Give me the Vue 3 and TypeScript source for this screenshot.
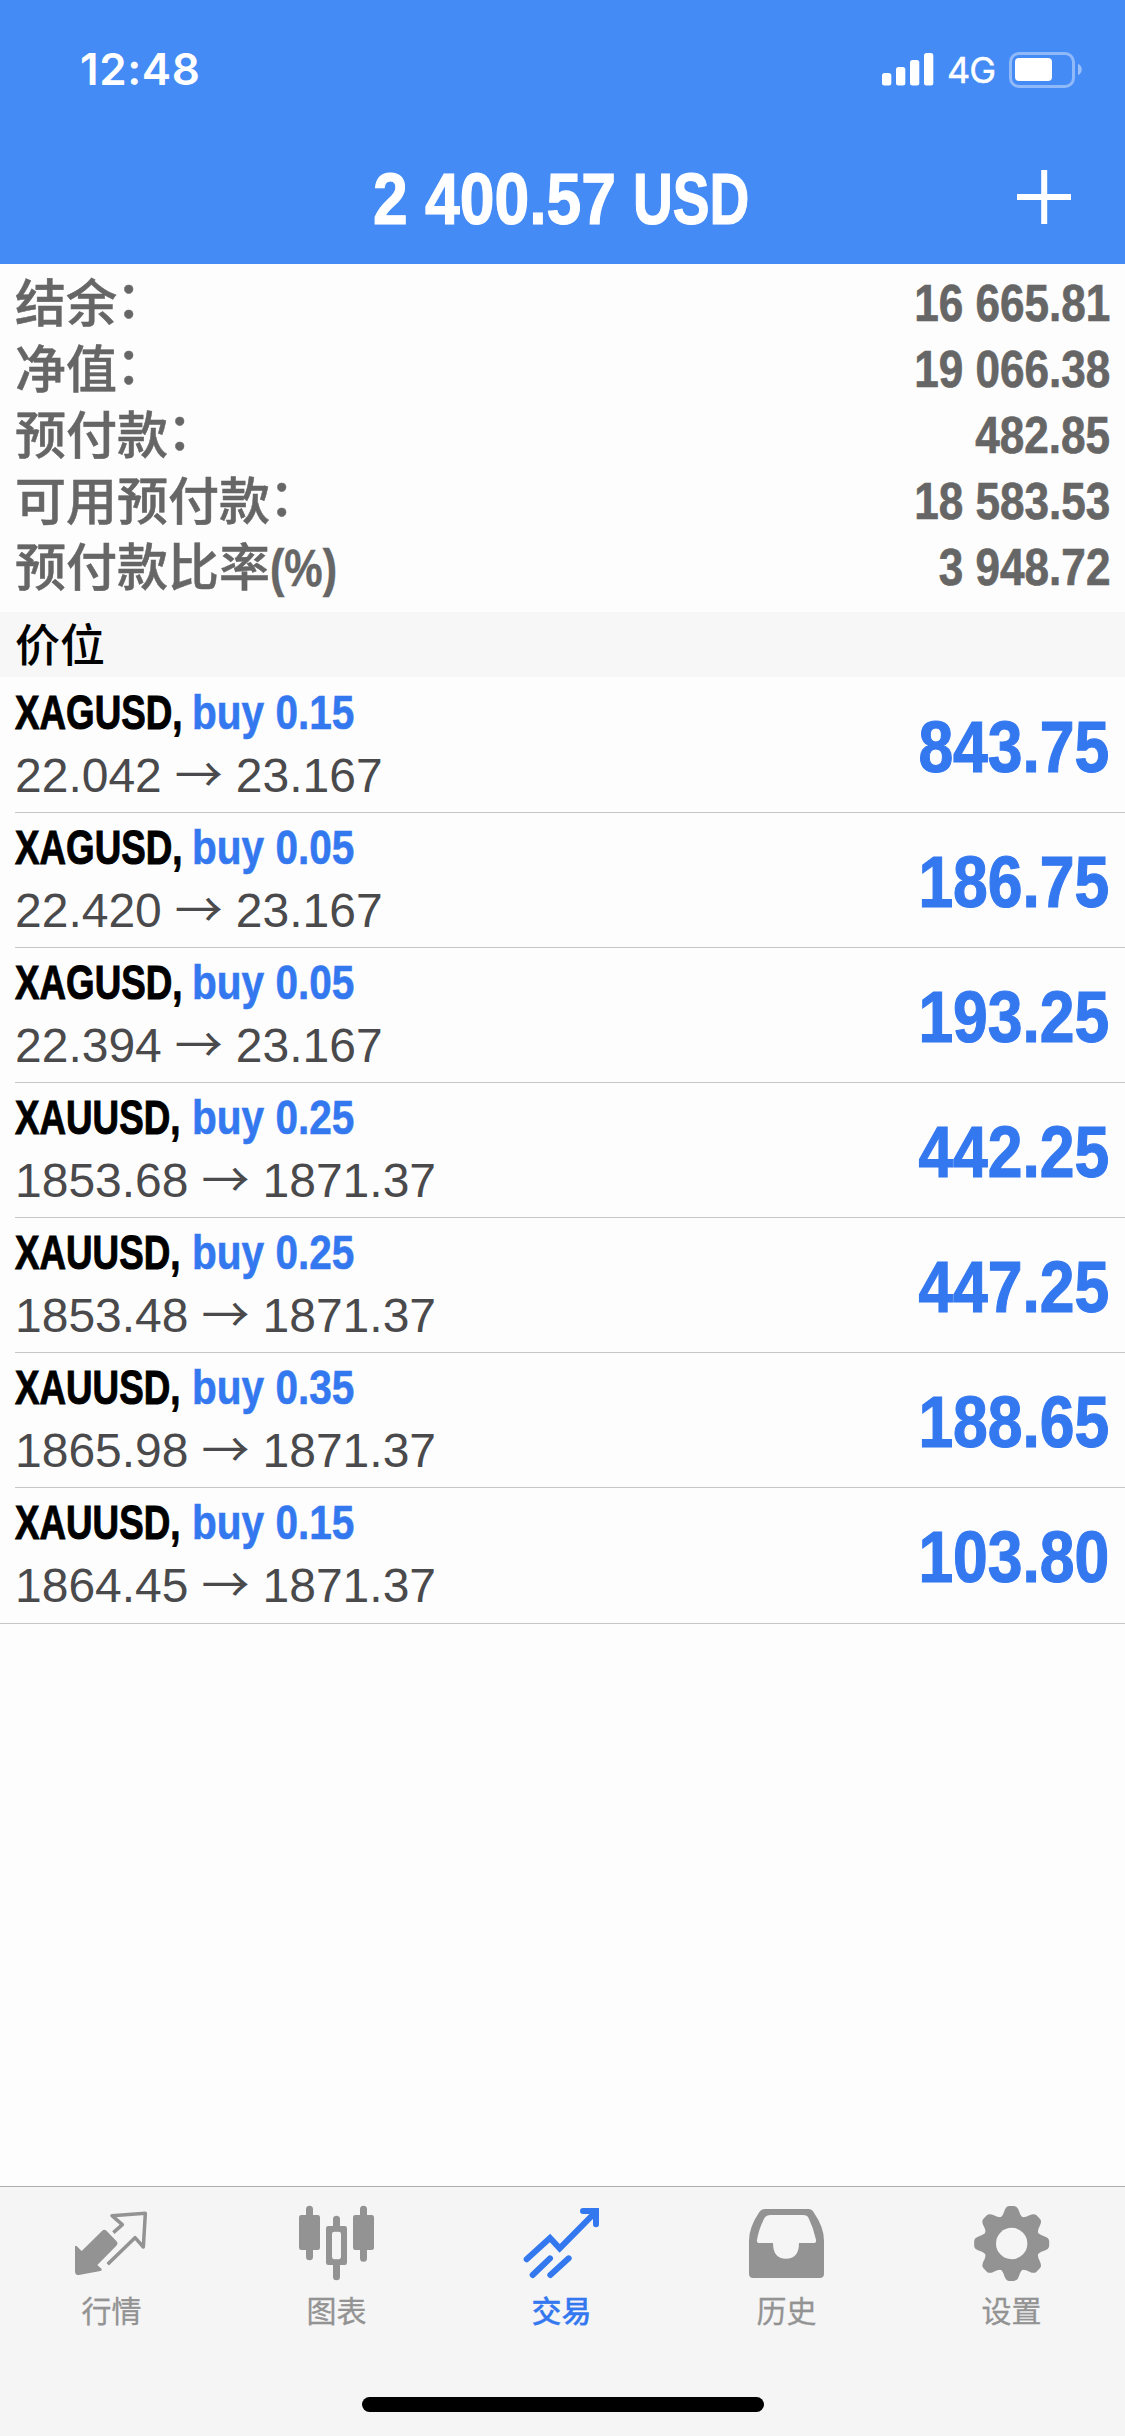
<script setup lang="ts">
interface SummaryRow {
  label: string
  suffix: string
  value: string
}

interface Position {
  symbol: string
  side: string
  open: string
  current: string
  profit: string
}

interface Tab {
  id: string
  label: string
  viewBox: string
}

const summary: SummaryRow[] = [
  { label: '结余', suffix: '：', value: '16 665.81' },
  { label: '净值', suffix: '：', value: '19 066.38' },
  { label: '预付款', suffix: '：', value: '482.85' },
  { label: '可用预付款', suffix: '：', value: '18 583.53' },
  { label: '预付款比率', suffix: '(%)', value: '3 948.72' },
]

const positions: Position[] = [
  { symbol: 'XAGUSD,', side: 'buy 0.15', open: '22.042', current: '23.167', profit: '843.75' },
  { symbol: 'XAGUSD,', side: 'buy 0.05', open: '22.420', current: '23.167', profit: '186.75' },
  { symbol: 'XAGUSD,', side: 'buy 0.05', open: '22.394', current: '23.167', profit: '193.25' },
  { symbol: 'XAUUSD,', side: 'buy 0.25', open: '1853.68', current: '1871.37', profit: '442.25' },
  { symbol: 'XAUUSD,', side: 'buy 0.25', open: '1853.48', current: '1871.37', profit: '447.25' },
  { symbol: 'XAUUSD,', side: 'buy 0.35', open: '1865.98', current: '1871.37', profit: '188.65' },
  { symbol: 'XAUUSD,', side: 'buy 0.15', open: '1864.45', current: '1871.37', profit: '103.80' },
]

const tabs: Tab[] = [
  { id: 'quotes', label: '行情', viewBox: '210 90 255 255' },
  { id: 'charts', label: '图表', viewBox: '885 90 255 255' },
  { id: 'trade', label: '交易', viewBox: '360 90 255 255' },
  { id: 'history', label: '历史', viewBox: '15 90 255 255' },
  { id: 'settings', label: '设置', viewBox: '690 90 255 255' },
]

const active = 'trade'
const teeth = [0, 45, 90, 135, 180, 225, 270, 315]
</script>

<template>
  <div class="screen">
    <header class="top">
      <div class="status">
        <span class="time">12:48</span>
        <div class="status-right">
          <svg class="signal" width="52" height="34" viewBox="0 0 52 34">
            <rect x="0" y="21" width="9.3" height="12.5" rx="2.5" />
            <rect x="14" y="15" width="9.3" height="18.5" rx="2.5" />
            <rect x="28" y="8" width="9.3" height="25.5" rx="2.5" />
            <rect x="42" y="1" width="9.3" height="32.5" rx="2.5" />
          </svg>
          <span class="network">4G</span>
          <svg class="battery" width="74" height="34" viewBox="0 0 74 34">
            <rect x="1.5" y="1.5" width="63" height="33" rx="8.5" fill="none" stroke="#fff" stroke-opacity=".4" stroke-width="3" />
            <rect x="6" y="6" width="37" height="23" rx="4" fill="#fff" />
            <path d="M69 12c5 1.500 5 9.500 0 11z" fill="#fff" fill-opacity=".45" />
          </svg>
        </div>
      </div>
      <div class="nav">
        <h1 class="title"><span class="title-num">2 400.57</span><span class="title-cur">USD</span></h1>
        <svg class="plus" width="54" height="54" viewBox="0 0 54 54">
          <path d="M27.200 0v54M0 27h54" stroke="#fff" stroke-width="6" />
        </svg>
      </div>
    </header>

    <section class="summary">
      <div v-for="row in summary" :key="row.label" class="summary-row">
        <span class="summary-label">{{ row.label }}<span :class="row.suffix === '：' ? 'colon' : 'percent'">{{ row.suffix }}</span></span>
        <span class="summary-value">{{ row.value }}</span>
      </div>
    </section>

    <h2 class="section">价位</h2>

    <ul class="list">
      <li v-for="(p, i) in positions" :key="i" class="row">
        <div class="info">
          <div class="line1">
            <span class="symbol">{{ p.symbol }}</span>
            <span class="side">{{ p.side }}</span>
          </div>
          <div class="line2">
            <span>{{ p.open }}</span>
            <span class="arrow">→</span>
            <span>{{ p.current }}</span>
          </div>
        </div>
        <span class="profit">{{ p.profit }}</span>
      </li>
    </ul>

    <nav class="tabbar">
      <div class="tabs">
        <div v-for="t in tabs" :key="t.id" class="tab" :class="{ active: t.id === active }">
          <svg width="85" height="85" :viewBox="t.viewBox">
            <template v-if="t.id === 'quotes'">
              <path
                d="M306 183q7-7 14 0l29 30q7 7 0 14l-57 58 13 12q2 5-4 6l-64 12q-11 1-12-10v-75q2-5 7 0l13 13z"
                fill="currentColor"
              />
              <path
                d="M340 188l27-24-31-27 100-7-6 101-25-28-82 80"
                fill="none" stroke="currentColor" stroke-width="10.500" stroke-linejoin="round"
              />
            </template>
            <template v-else-if="t.id === 'charts'">
              <path d="M928.500 118v142M1090.500 118v147M1009.500 148v25M1009.500 280v40" stroke="currentColor" stroke-width="21" stroke-linecap="round" />
              <rect x="897" y="135" width="63" height="105" rx="7" fill="currentColor" />
              <rect x="1059" y="135" width="63" height="105" rx="7" fill="currentColor" />
              <path
                fill-rule="evenodd" fill="currentColor"
                d="M985 168h49q7 0 7 7v103q0 7-7 7h-49q-7 0-7-7v-103q0-7 7-7zM1003 185q-7 0-7 7v67q0 9 7 9h13q7 0 7-9v-67q0-7-7-7z"
              />
            </template>
            <template v-else-if="t.id === 'trade'">
              <g fill="none" stroke="currentColor" stroke-width="18">
                <path d="M380 268l70-64 29 31 103-104" stroke-linecap="round" />
                <path d="M549 123h39v40" stroke-linecap="round" />
                <path d="M553 114h44v44z" fill="currentColor" stroke="none" />
                <path d="M398 315l52-50M451 315l55-50" stroke-linecap="round" />
              </g>
            </template>
            <template v-else-if="t.id === 'history'">
              <path
                fill-rule="evenodd" fill="currentColor"
                d="M75 117h130q10 0 16 10 31 45 31 85v99q0 13-13 13h-199q-13 0-13-13v-99q0-40 31-86 6-9 17-9zM92 135q-13 0-19 10-16 30-22 64-2 10 8 10h40q0 47 39 47 39 0 39-47h43q10 0 8-10-8-36-22-64-4-10-17-10z"
              />
            </template>
            <template v-else>
              <path
                v-for="a in teeth" :key="a"
                d="M774 147q14-5 19-24 5-15 15-15h14q10 0 15 15 5 19 19 24v40h-82z"
                :transform="`rotate(${a} 815 220.500)`" fill="currentColor"
              />
              <circle cx="815" cy="220.500" r="66" fill="none" stroke="currentColor" stroke-width="38" />
              <circle cx="815" cy="220.500" r="47" fill="#f5f5f5" />
            </template>
          </svg>
          <span class="tab-label">{{ t.label }}</span>
        </div>
      </div>
      <div class="home"></div>
    </nav>
  </div>
</template>

<style>
body {
  margin: 0;
}
</style>

<style scoped>
.screen {
  width: 1125px;
  height: 2436px;
  display: flex;
  flex-direction: column;
  background: #fdfdfd;
  font-family: "Liberation Sans", "Noto Sans CJK SC", sans-serif;
  overflow: hidden;
}

.top {
  box-sizing: border-box;
  height: 264px;
  flex: none;
  background: #458bf5;
  color: #fff;
}

.status {
  box-sizing: border-box;
  height: 159px;
  padding: 49px 42px 0 80px;
  display: flex;
  justify-content: space-between;
  align-items: flex-start;
}

.time {
  font: 600 44px/40px Inter, sans-serif;
  letter-spacing: 0.6px;
}

.status-right {
  display: flex;
  align-items: flex-start;
  padding-top: 3px;
}

.signal {
  fill: #fff;
}

.network {
  width: 62px;
  margin-left: 13px;
  font: 400 36px/37px Inter, sans-serif;
  letter-spacing: -1px;
  -webkit-text-stroke: 0.4px currentColor;
}

.battery {
  display: block;
  overflow: visible;
}

.nav {
  display: flex;
  justify-content: space-between;
  padding: 0 54px 0 373px;
}

.title {
  display: flex;
  margin: 0;
  font-size: 73px;
  line-height: 80px;
  font-weight: 700;
  white-space: pre;
}

.title-num {
  width: 260px;
  transform: scaleX(0.855);
  transform-origin: 0 50%;
  -webkit-text-stroke: 1.2px currentColor;
}

.title-cur {
  width: 130px;
  transform: scaleX(0.755);
  transform-origin: 0 50%;
  -webkit-text-stroke: 1.2px currentColor;
}

.plus {
  margin-top: 11px;
}

.summary {
  padding: 7px 15px 11px;
  color: #666;
}

.summary-row {
  display: flex;
  justify-content: space-between;
  align-items: flex-start;
  height: 66px;
}

.summary-label {
  font-size: 51px;
  line-height: 68px;
  font-weight: 500;
  white-space: nowrap;
  -webkit-text-stroke: 0.5px currentColor;
}

.colon {
  position: relative;
  top: -4px;
  left: -1px;
}

.percent {
  display: inline-block;
  font-weight: 700;
  transform: scaleX(0.845);
  transform-origin: 0 50%;
}

.summary-value {
  font-size: 52px;
  font-weight: 700;
  line-height: 65px;
  transform: scaleX(0.848);
  transform-origin: 100% 50%;
  -webkit-text-stroke: 0.7px currentColor;
}

.section {
  height: 65px;
  margin: 0 0 1px;
  padding-left: 15px;
  background: #f7f7f7;
  color: #000;
  font-size: 45px;
  font-weight: 500;
  line-height: 69px;
}

.list {
  margin: 0;
  padding: 0;
  list-style: none;
}

.row {
  box-sizing: border-box;
  height: 135px;
  margin-left: 15px;
  padding: 4px 16px 0 0;
  border-bottom: 1px solid #c6c6c8;
  display: flex;
  justify-content: space-between;
  align-items: flex-start;
}

.row:last-child {
  margin-left: 0;
  padding-left: 15px;
  height: 136px;
}

.line1 {
  display: flex;
  height: 60px;
  font-size: 49px;
  line-height: 60px;
  font-weight: 700;
  white-space: nowrap;
}

.symbol {
  width: 177px;
  color: #000;
  transform: scaleX(0.75);
  transform-origin: 0 50%;
  -webkit-text-stroke: 1px currentColor;
}

.side {
  color: #3478f0;
  transform: scaleX(0.828);
  transform-origin: 0 50%;
  -webkit-text-stroke: 0.6px currentColor;
}

.line2 {
  display: flex;
  gap: 13px;
  height: 60px;
  margin-top: 4px;
  font-size: 48px;
  line-height: 60px;
  color: #4a4a4c;
}

.arrow {
  width: 48px;
  font-family: Roboto, "Noto Sans CJK SC", sans-serif;
}

.profit {
  margin-top: 25px;
  color: #3478f0;
  font-size: 73px;
  line-height: 80px;
  font-weight: 700;
  transform: scaleX(0.855);
  transform-origin: 100% 50%;
  -webkit-text-stroke: 1.2px currentColor;
}

.tabbar {
  box-sizing: border-box;
  height: 250px;
  margin-top: auto;
  border-top: 1px solid #adadad;
  background: #f5f5f5;
  display: flex;
  flex-direction: column;
  align-items: center;
}

.tabs {
  display: flex;
  width: 100%;
  height: 210px;
}

.tab {
  flex: 1;
  display: flex;
  flex-direction: column;
  align-items: center;
  padding-top: 13px;
  color: #939393;
}

.tab.active {
  color: #3478f0;
}

.tab-label {
  margin: 9px 2px 0 0;
  font: 400 30px/30px "Noto Sans CJK SC", sans-serif;
  -webkit-text-stroke: 0.3px currentColor;
}

.active .tab-label {
  font-weight: 500;
}

.home {
  width: 402px;
  height: 15px;
  border-radius: 8px;
  background: #000;
}
</style>
